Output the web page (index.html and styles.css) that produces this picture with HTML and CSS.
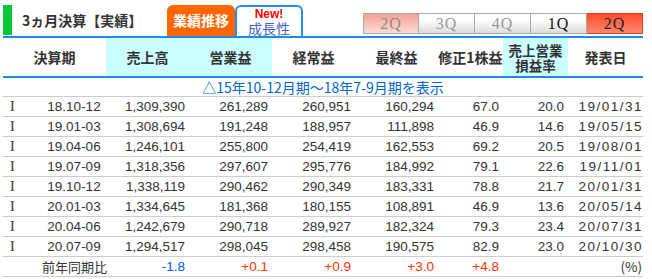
FILE: index.html
```html
<!DOCTYPE html>
<html lang="ja">
<head>
<meta charset="utf-8">
<title>3ヵ月決算【実績】</title>
<link rel="stylesheet" href="styles.css">
</head>
<body>
<div class="wrap">
  <div class="top">
    <div class="title"><span class="bar"></span><span class="title-text">3ヵ月決算【実績】</span></div>
    <div class="tabs">
      <div class="tab tab-active">業績推移</div>
      <div class="tab tab-new"><span class="new">New!</span><span class="growth">成長性</span></div>
    </div>
    <div class="qbar">
      <div class="qbtn q-prev">2Q</div>
      <div class="qbtn q-dim">3Q</div>
      <div class="qbtn q-dim">4Q</div>
      <div class="qbtn q-norm">1Q</div>
      <div class="qbtn q-cur">2Q</div>
    </div>
  </div>
  <table class="fin">
    <colgroup>
      <col class="c-i"><col class="c-per"><col class="c-num"><col class="c-num"><col class="c-num"><col class="c-num"><col class="c-sm"><col class="c-sm"><col class="c-date">
    </colgroup>
    <thead>
      <tr>
        <th colspan="2">決算期</th>
        <th class="hl">売上高</th>
        <th class="hl">営業益</th>
        <th>経常益</th>
        <th>最終益</th>
        <th>修正1株益</th>
        <th class="hl"><div class="two"><span class="ln">売上営業</span><span class="ln">損益率</span></div></th>
        <th>発表日</th>
      </tr>
    </thead>
    <tbody>
      <tr class="note"><td colspan="9">△15年10-12月期～18年7-9月期を表示</td></tr>
      <tr><td class="i">I</td><td class="per">18.10-12</td><td>1,309,390</td><td>261,289</td><td>260,951</td><td>160,294</td><td>67.0</td><td>20.0</td><td class="date">19/01/31</td></tr>
      <tr><td class="i">I</td><td class="per">19.01-03</td><td>1,308,694</td><td>191,248</td><td>188,957</td><td>111,898</td><td>46.9</td><td>14.6</td><td class="date">19/05/15</td></tr>
      <tr><td class="i">I</td><td class="per">19.04-06</td><td>1,246,101</td><td>255,800</td><td>254,419</td><td>162,553</td><td>69.2</td><td>20.5</td><td class="date">19/08/01</td></tr>
      <tr><td class="i">I</td><td class="per">19.07-09</td><td>1,318,356</td><td>297,607</td><td>295,776</td><td>184,992</td><td>79.1</td><td>22.6</td><td class="date">19/11/01</td></tr>
      <tr><td class="i">I</td><td class="per">19.10-12</td><td>1,338,119</td><td>290,462</td><td>290,349</td><td>183,331</td><td>78.8</td><td>21.7</td><td class="date">20/01/31</td></tr>
      <tr><td class="i">I</td><td class="per">20.01-03</td><td>1,334,645</td><td>181,368</td><td>180,155</td><td>108,891</td><td>46.9</td><td>13.6</td><td class="date">20/05/14</td></tr>
      <tr><td class="i">I</td><td class="per">20.04-06</td><td>1,242,679</td><td>290,718</td><td>289,927</td><td>182,324</td><td>79.3</td><td>23.4</td><td class="date">20/07/31</td></tr>
      <tr><td class="i">I</td><td class="per">20.07-09</td><td>1,294,517</td><td>298,045</td><td>298,458</td><td>190,575</td><td>82.9</td><td>23.0</td><td class="date">20/10/30</td></tr>
      <tr class="yoy"><td></td><td class="per jp">前年同期比</td><td class="minus">-1.8</td><td class="plus">+0.1</td><td class="plus">+0.9</td><td class="plus">+3.0</td><td class="plus">+4.8</td><td></td><td class="pct">(%)</td></tr>
    </tbody>
  </table>
</div>
</body>
</html>
```
FILE: styles.css
```css
body {
  margin: 0;
  background: #fff;
  color: #333;
  font-family: "Liberation Sans", Arial, "Noto Sans CJK JP", sans-serif;
}

.wrap {
  width: 640px;
  margin-left: 3px;
}

.top {
  display: flex;
  height: 31px;
  padding-top: 5px;
  border-bottom: 2px solid #1a8ce8;
}

.title {
  width: 164px;
  height: 30px;
  display: flex;
  align-items: center;
}

.bar {
  width: 9px;
  height: 30px;
  background: #00c837;
  margin-right: 10px;
}

.title-text {
  font-family: "Noto Sans CJK JP", sans-serif;
  font-weight: bold;
  font-size: 14px;
  color: #333;
  line-height: 16px;
}

.tabs {
  display: flex;
}

.tab {
  width: 68px;
  height: 31px;
  box-sizing: border-box;
  border-radius: 6px 6px 0 0;
  font-family: "Noto Sans CJK JP", sans-serif;
  display: flex;
  flex-direction: column;
  align-items: center;
  justify-content: center;
}

.tab-active {
  background: #ff6600;
  color: #fff;
  font-weight: bold;
  font-size: 14px;
  line-height: 16px;
  padding-bottom: 1px;
}

.tab-new {
  border: 2px solid #1e90ff;
  border-bottom: none;
  background: #fff;
  padding-top: 0;
}

.new {
  display: block;
  color: #ff0000;
  font-family: "Liberation Sans", Arial, sans-serif;
  font-weight: bold;
  font-size: 12px;
  line-height: 13px;
}

.growth {
  display: block;
  color: #4463c9;
  font-size: 14px;
  line-height: 15px;
}

.qbar {
  margin-left: auto;
  margin-top: 8px;
  height: 21px;
  display: flex;
}

.qbtn {
  width: 56px;
  height: 21px;
  box-sizing: border-box;
  border: 1px solid #a8a8a8;
  border-left: none;
  font-family: "Liberation Serif", "Times New Roman", serif;
  font-size: 16px;
  line-height: 20px;
  text-align: center;
  letter-spacing: 1px;
}

.qbtn:first-child {
  border-left: 1px solid #a8a8a8;
}

.q-prev {
  background: linear-gradient(to bottom, #f3a295, #fcdcd6);
  color: #8a8a8a;
}

.q-dim {
  background: linear-gradient(to bottom, #ffffff 30%, #dcdcdc);
  color: #999;
}

.q-norm {
  background: linear-gradient(to bottom, #ffffff 30%, #dcdcdc);
  color: #111;
}

.q-cur {
  background: linear-gradient(to bottom, #ff4c2c, #ff8a70);
  border-color: #e0421e;
  color: #222;
}

.fin {
  width: 640px;
  table-layout: fixed;
  border-collapse: separate;
  border-spacing: 0;
  font-size: 13.5px;
}

.c-i { width: 33px; }
.c-per { width: 70px; }
.c-num { width: 83px; }
.c-sm { width: 65px; }
.c-date { width: 75px; }

.fin th {
  font-family: "Noto Sans CJK JP", sans-serif;
  font-weight: bold;
  font-size: 14px;
  color: #333;
  height: 38px;
  padding: 0;
  line-height: 16px;
  text-align: center;
  vertical-align: middle;
  border-bottom: 2px solid #1a8ce8;
  white-space: nowrap;
}

.fin th.hl {
  background: #ccffff;
}

.two {
  display: flex;
  flex-direction: column;
  align-items: center;
  font-size: 13.5px;
}

.two .ln {
  display: block;
  line-height: 16px;
  height: 15px;
  overflow: visible;
}

.fin td {
  padding: 0 4px 0 0;
  line-height: 19px;
  text-align: right;
  border-bottom: 1px solid #cccccc;
  white-space: nowrap;
  color: #333;
}

.fin tr.note td {
  font-family: "Noto Sans CJK JP", sans-serif;
  font-size: 14px;
  color: #0066cc;
  text-align: center;
  line-height: 18px;
  padding: 0;
}

.fin td.i {
  font-family: "Liberation Serif", "Times New Roman", serif;
  text-align: left;
  padding-left: 7px;
  font-size: 14px;
}

.fin td.per {
  text-align: center;
  padding: 0 0 0 6px;
}

.fin td.jp {
  font-family: "Noto Sans CJK JP", sans-serif;
  font-size: 13px;
}

.fin td.date {
  letter-spacing: 1.5px;
  padding-right: 0;
}

.fin td.minus { color: #0055ff; }
.fin td.plus { color: #ff3300; }

.fin td.pct {
  padding-right: 1px;
  font-family: "Noto Sans CJK JP", sans-serif;
}
```
